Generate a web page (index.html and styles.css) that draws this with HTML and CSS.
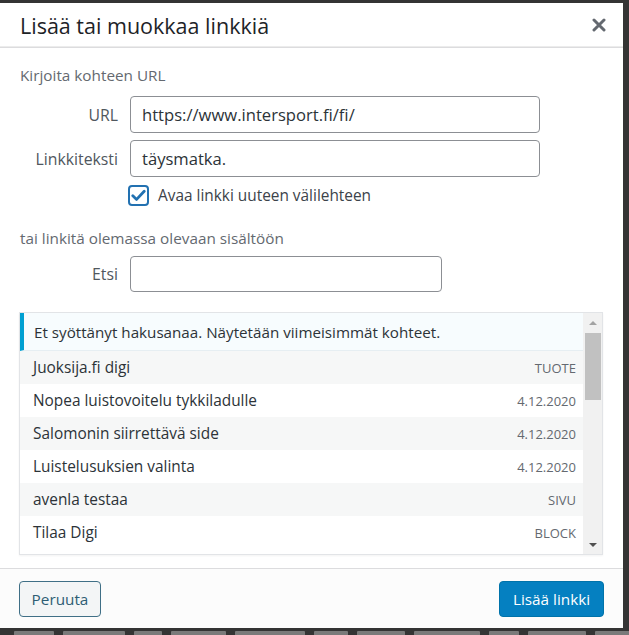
FILE: index.html
```html
<!DOCTYPE html>
<html lang="fi">
<head>
<meta charset="utf-8">
<title>Lisää tai muokkaa linkkiä</title>
<link rel="stylesheet" href="styles.css">
</head>
<body>
<div class="dialog">
  <div class="dlg-head">
    <h1 class="dlg-title">Lisää tai muokkaa linkkiä</h1>
    <button class="dlg-close" aria-label="Sulje">
      <svg width="14" height="14" viewBox="0 0 14 14"><path d="M2 2 L12 12 M12 2 L2 12" stroke="#646970" stroke-width="3" stroke-linecap="round"/></svg>
    </button>
  </div>
  <div class="dlg-body">
    <p class="section-label first">Kirjoita kohteen URL</p>
    <div class="form-grid">
      <label class="f-label">URL</label>
      <div class="f-input">https://www.intersport.fi/fi/</div>
      <label class="f-label">Linkkiteksti</label>
      <div class="f-input">täysmatka.</div>
      <span></span>
      <div class="check-row">
        <span class="checkbox">
          <svg width="15" height="13" viewBox="0 0 15 13"><path d="M1.8 6.8 L5.6 10.4 L13.2 2.2" fill="none" stroke="#2271b1" stroke-width="2.8" stroke-linecap="round" stroke-linejoin="round"/></svg>
        </span>
        <span class="check-text">Avaa linkki uuteen välilehteen</span>
      </div>
    </div>
    <p class="section-label second">tai linkitä olemassa olevaan sisältöön</p>
    <div class="form-grid search">
      <label class="f-label">Etsi</label>
      <div class="f-input short"></div>
    </div>
    <div class="results">
      <div class="results-list">
        <div class="notice">Et syöttänyt hakusanaa. Näytetään viimeisimmät kohteet.</div>
        <div class="row alt"><span class="r-title">Juoksija.fi digi</span><span class="r-meta">TUOTE</span></div>
        <div class="row"><span class="r-title">Nopea luistovoitelu tykkiladulle</span><span class="r-meta">4.12.2020</span></div>
        <div class="row alt"><span class="r-title">Salomonin siirrettävä side</span><span class="r-meta">4.12.2020</span></div>
        <div class="row"><span class="r-title">Luistelusuksien valinta</span><span class="r-meta">4.12.2020</span></div>
        <div class="row alt"><span class="r-title">avenla testaa</span><span class="r-meta">SIVU</span></div>
        <div class="row"><span class="r-title">Tilaa Digi</span><span class="r-meta">BLOCK</span></div>
      </div>
      <div class="scrollbar">
        <span class="arrow up"></span>
        <div class="track"><div class="thumb"></div></div>
        <span class="arrow down"></span>
      </div>
    </div>
  </div>
  <div class="dlg-foot">
    <button class="btn secondary">Peruuta</button>
    <button class="btn primary">Lisää linkki</button>
  </div>
</div>
<div class="backdrop" aria-hidden="true">
  <span style="width:40px"></span><span style="width:62px"></span><span style="width:28px"></span><span style="width:55px"></span><span style="width:70px"></span><span style="width:34px"></span><span style="width:48px"></span><span style="width:66px"></span><span style="width:30px"></span><span style="width:58px"></span><span style="width:44px"></span>
</div>
</body>
</html>
```

FILE: styles.css
```css
html, body {
  margin: 0;
  padding: 0;
  height: 635px;
  overflow: hidden;
}
body {
  background: #343434;
  font-family: "Open Sans", "Noto Sans", sans-serif;
  color: #32373c;
}
.dialog {
  width: 623px;
  height: 625px;
  margin-top: 3px;
  background: #fff;
  display: flex;
  flex-direction: column;
}
.dlg-head {
  height: 44px;
  border-bottom: 1px solid #dcdcde;
  box-shadow: 0 -5px 0 -4px #ececec inset;
  display: flex;
  align-items: center;
  justify-content: space-between;
  padding: 0 20px 0 20px;
  flex: none;
}
.dlg-title {
  margin: 0;
  font-size: 21.5px;
  font-weight: 400;
  color: #1d2327;
}
.dlg-close {
  border: 0;
  background: none;
  padding: 0;
  width: 16px;
  height: 16px;
  display: flex;
  align-items: center;
  justify-content: center;
  margin-right: -4px;
}
.dlg-body {
  flex: 1;
  padding: 0 20px 0 19px;
}
.section-label {
  margin: 0;
  font-size: 15.3px;
  line-height: 20px;
  color: #646970;
  padding-left: 1px;
}
.section-label.first { margin-top: 17px; margin-bottom: 11px; }
.section-label.second { margin-top: 22px; margin-bottom: 8px; }
.form-grid {
  display: grid;
  grid-template-columns: 99px 410px;
  column-gap: 12px;
  row-gap: 7px;
  align-items: center;
}
.f-label {
  text-align: right;
  font-size: 15.8px;
  color: #50575e;
}
.f-input {
  height: 37px;
  box-sizing: border-box;
  border: 1px solid #8c8f94;
  border-radius: 4px;
  padding: 0 11px;
  display: flex;
  align-items: center;
  font-size: 16.6px;
  color: #2c3338;
}
.f-input.short {
  width: 312px;
  height: 36px;
}
.check-row {
  display: flex;
  align-items: center;
  gap: 9px;
  margin-top: 1px;
  margin-left: -2px;
}
.checkbox {
  width: 21px;
  height: 21px;
  box-sizing: border-box;
  border: 2px solid #2271b1;
  border-radius: 4px;
  display: flex;
  align-items: center;
  justify-content: center;
}
.check-text {
  font-size: 15.4px;
  color: #3c434a;
}
.results {
  margin-top: 20px;
  height: 243px;
  box-sizing: border-box;
  border: 1px solid #e2e4e7;
  box-shadow: 0 1px 2px rgba(0,0,0,0.05);
  display: flex;
  overflow: hidden;
}
.results-list {
  flex: 1;
  display: flex;
  flex-direction: column;
}
.notice {
  height: 38px;
  box-sizing: border-box;
  border-left: 4px solid #00a0d2;
  border-bottom: 1px solid #e6eef2;
  background: #f7fcfe;
  padding-left: 10px;
  display: flex;
  align-items: center;
  font-size: 15.2px;
  color: #2c3338;
  flex: none;
}
.row {
  height: 33px;
  display: flex;
  align-items: center;
  justify-content: space-between;
  padding: 0 7px 0 13px;
  flex: none;
}
.row.alt { background: #f6f7f7; }
.r-title {
  font-size: 15.4px;
  color: #2c3338;
}
.r-meta {
  font-size: 13px;
  color: #646970;
}
.scrollbar {
  width: 19px;
  background: #f1f1f1;
  display: flex;
  flex-direction: column;
  align-items: center;
}
.arrow {
  width: 0;
  height: 0;
  border-left: 4px solid transparent;
  border-right: 4px solid transparent;
  flex: none;
}
.arrow.up {
  border-bottom: 4px solid #a3a3a3;
  margin: 8px 0 8px;
}
.arrow.down {
  border-top: 4px solid #505050;
  margin: 6px 0 7px;
}
.track {
  flex: 1;
  width: 100%;
  display: flex;
  justify-content: center;
}
.thumb {
  width: 16px;
  height: 67px;
  background: #c1c1c1;
}
.dlg-foot {
  height: 60px;
  box-sizing: border-box;
  border-top: 1px solid #dcdcde;
  background: #fcfcfc;
  display: flex;
  align-items: center;
  justify-content: space-between;
  padding: 0 19px 0 19px;
  flex: none;
}
.btn {
  height: 36px;
  box-sizing: border-box;
  border-radius: 4px;
  font-family: "Open Sans", "Noto Sans", sans-serif;
  font-size: 15.3px;
  padding: 0;
}
.btn.secondary {
  width: 82px;
  background: #f3f5f6;
  border: 1px solid #3f6f86;
  color: #2d5d74;
}
.btn.primary {
  width: 105px;
  background: #0580c1;
  border: 1px solid #0073aa;
  color: #fff;
}
.backdrop {
  display: flex;
  gap: 9px;
  padding: 3px 0 0 14px;
  filter: blur(0.7px);
}
.backdrop span {
  display: block;
  height: 6px;
  background: #7a7a7a;
  border-radius: 1px;
  flex: none;
}
```
